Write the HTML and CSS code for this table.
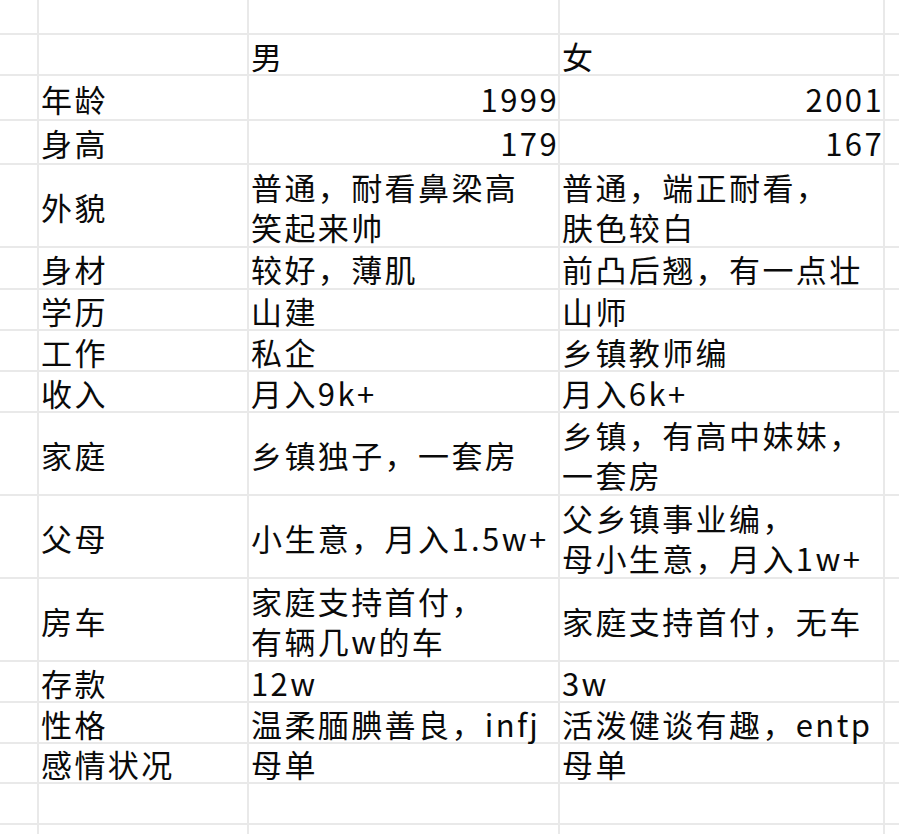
FILE: index.html
```html
<!DOCTYPE html>
<html lang="zh">
<head>
<meta charset="utf-8">
<link rel="stylesheet" href="styles.css">
</head>
<body>
<div class="sheet">
  <div class="c"></div><div class="c"></div><div class="c"></div><div class="c"></div><div class="c"></div>

  <div class="c"></div><div class="c"></div><div class="c"><span>男</span></div><div class="c"><span>女</span></div><div class="c"></div>

  <div class="c"></div><div class="c"><span>年龄</span></div><div class="c num"><span>1999</span></div><div class="c num"><span>2001</span></div><div class="c"></div>

  <div class="c"></div><div class="c"><span>身高</span></div><div class="c num"><span>179</span></div><div class="c num"><span>167</span></div><div class="c"></div>

  <div class="c"></div><div class="c"><span>外貌</span></div><div class="c"><div class="lines"><span>普通，耐看鼻梁高</span><span>笑起来帅</span></div></div><div class="c"><div class="lines"><span>普通，端正耐看，</span><span>肤色较白</span></div></div><div class="c"></div>

  <div class="c"></div><div class="c"><span>身材</span></div><div class="c"><span>较好，薄肌</span></div><div class="c"><span>前凸后翘，有一点壮</span></div><div class="c"></div>

  <div class="c"></div><div class="c"><span>学历</span></div><div class="c"><span>山建</span></div><div class="c"><span>山师</span></div><div class="c"></div>

  <div class="c"></div><div class="c"><span>工作</span></div><div class="c"><span>私企</span></div><div class="c"><span>乡镇教师编</span></div><div class="c"></div>

  <div class="c"></div><div class="c"><span>收入</span></div><div class="c"><span>月入9k+</span></div><div class="c"><span>月入6k+</span></div><div class="c"></div>

  <div class="c"></div><div class="c"><span>家庭</span></div><div class="c"><span>乡镇独子，一套房</span></div><div class="c"><div class="lines"><span>乡镇，有高中妹妹，</span><span>一套房</span></div></div><div class="c"></div>

  <div class="c"></div><div class="c"><span>父母</span></div><div class="c"><span>小生意，月入1.5w+</span></div><div class="c"><div class="lines"><span>父乡镇事业编，</span><span>母小生意，月入1w+</span></div></div><div class="c"></div>

  <div class="c"></div><div class="c"><span>房车</span></div><div class="c"><div class="lines"><span>家庭支持首付，</span><span>有辆几w的车</span></div></div><div class="c"><span>家庭支持首付，无车</span></div><div class="c"></div>

  <div class="c"></div><div class="c"><span>存款</span></div><div class="c"><span>12w</span></div><div class="c"><span>3w</span></div><div class="c"></div>

  <div class="c"></div><div class="c"><span>性格</span></div><div class="c"><span>温柔腼腆善良，infj</span></div><div class="c"><span>活泼健谈有趣，entp</span></div><div class="c"></div>

  <div class="c"></div><div class="c"><span>感情状况</span></div><div class="c"><span>母单</span></div><div class="c"><span>母单</span></div><div class="c"></div>

  <div class="c"></div><div class="c"></div><div class="c"></div><div class="c"></div><div class="c"></div>

  <div class="c"></div><div class="c"></div><div class="c"></div><div class="c"></div><div class="c"></div>
</div>
</body>
</html>
```

FILE: styles.css
```css
html, body {
  margin: 0;
  padding: 0;
  background: #ffffff;
  overflow: hidden;
  width: 899px;
  height: 834px;
}

.sheet {
  display: grid;
  grid-template-columns: 37px 208px 309px 323px 40px;
  grid-template-rows: 33px 39px 43px 42px 81px 40px 39px 39px 39px 81px 81px 81px 39px 39px 38px 39px 30px;
  gap: 2px;
  background: #e9e9e9;
  width: 925px;
  font-family: "Noto Sans CJK SC", "Noto Sans", sans-serif;
  font-size: 31px;
  letter-spacing: 2.4px;
  color: #0a0a0a;
}

.c {
  background: #ffffff;
  display: flex;
  align-items: center;
  padding: 2px 3px 0 2px;
  white-space: nowrap;
  line-height: 40px;
  min-width: 0;
}

.c span {
  display: block;
}

.lines {
  display: flex;
  flex-direction: column;
}

.lines span {
  height: 40px;
  line-height: 40px;
}

.num {
  justify-content: flex-end;
  padding-right: 1px;
}

.num span {
  margin-right: -2px;
}
```
